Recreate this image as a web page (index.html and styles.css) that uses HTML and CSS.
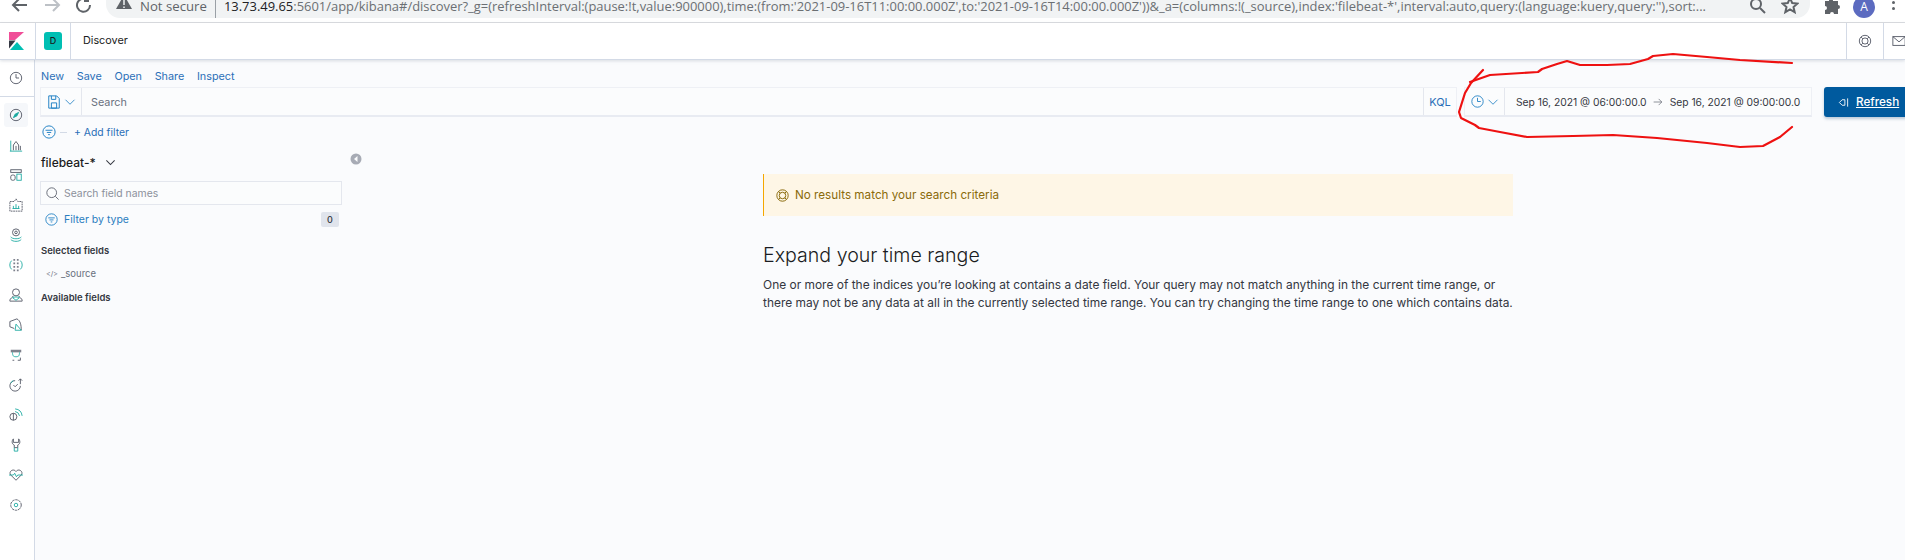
FILE: index.html
```html
<!DOCTYPE html>
<html lang="en">
<head>
<meta charset="utf-8">
<title>Discover - Kibana</title>
<link rel="stylesheet" href="styles.css">
</head>
<body>
<div class="page">
  <div class="browser">
    <div class="browser-nav">
      <span class="slot"><svg viewBox="0 0 22 22" width="22" height="22" class="ic-dark"><path d="M18 5H5M10-1 4 5l6 6"/></svg></span>
      <span class="slot"><svg viewBox="0 0 22 22" width="22" height="22" class="ic-light"><path d="M4 5h13M12-1l6 6-6 6"/></svg></span>
      <span class="slot"><svg viewBox="0 0 22 22" width="22" height="22" class="ic-dark"><path d="M17 5a6.500 6.500 0 1 1-2-4.500M15-3v4h-4"/></svg></span>
    </div>
    <div class="address">
      <svg viewBox="0 0 18 18" width="18" height="18" class="warn"><path d="M9 0 17 14H1Z"/><path d="M9 5v5M9 11.500v1.500" class="warn-mark"/></svg>
      <span class="not-secure">Not secure</span>
      <span class="addr-sep"></span>
      <span class="url"><span class="url-host">13.73.49.65</span>:5601/app/kibana#/discover?_g=(refreshInterval:(pause:!t,value:900000),time:(from:'2021-09-16T11:00:00.000Z',to:'2021-09-16T14:00:00.000Z'))&amp;_a=(columns:!(_source),index:'filebeat-*',interval:auto,query:(language:kuery,query:''),sort:...</span>
      <svg viewBox="0 0 18 18" width="18" height="18" class="ic-dark addr-zoom"><circle cx="7" cy="4" r="5"/><path d="m11 8 5 5"/></svg>
      <svg viewBox="0 0 18 18" width="18" height="18" class="ic-dark addr-star"><path d="m9-2 2.200 5 5.300.5-4 3.500 1.200 5.200L9 9.500l-4.700 2.700L5.500 7l-4-3.500L6.800 3Z"/></svg>
    </div>
    <span class="ext"><svg viewBox="0 0 18 18" width="18" height="18" class="ext-ic"><path d="M2 1h4a2 2 0 0 1 4 0h5v4a2 2 0 0 1 0 4v5H11a2 2 0 0 0-4 0H2v-4a2 2 0 0 0 0-4Z"/></svg></span>
    <span class="avatar">A</span>
    <span class="dots"><i></i><i></i></span>
  </div>

  <header class="kbn-header">
    <div class="logo-cell">
      <svg viewBox="0 0 15 18" width="15" height="18"><path d="M0 0h15L6 8H0Z" fill="#f04e98"/><path d="M0 8.500h6.500L0 16.500Z" fill="#343741"/><path d="M1 18 8 10l7 8Z" fill="#00bfb3"/></svg>
    </div>
    <div class="space-cell"><span class="space-badge">D</span></div>
    <div class="crumb">Discover</div>
    <div class="head-icon">
      <svg viewBox="0 0 16 16" width="16" height="16" class="ic-grey"><circle cx="8" cy="8" r="6.500"/><circle cx="8" cy="8" r="3.500"/><path d="m3.500 3.500 2 2M12.500 3.500l-2 2M3.500 12.500l2-2M12.500 12.500l-2-2"/></svg>
    </div>
    <div class="head-icon mail">
      <svg viewBox="0 0 16 16" width="16" height="16" class="ic-grey"><rect x="1" y="3" width="14" height="10"/><path d="m1 3 7 6 7-6"/></svg>
    </div>
  </header>

  <div class="body-row">
    <nav class="side-nav">
      <div class="nav-recent">
        <svg viewBox="0 0 16 16" width="14" height="14" class="ic-grey"><circle cx="8" cy="8" r="6.500"/><path d="M8 3.500V8h3.500"/></svg>
      </div>
      <div class="nav-list">
        <span class="nav-item active"><svg viewBox="0 0 16 16" width="16" height="16" class="ic-grey"><circle cx="8" cy="8" r="6.500"/><path d="m11 5-4 2-2 4 4-2Z" class="teal-fill"/></svg></span>
        <span class="nav-item"><svg viewBox="0 0 16 16" width="16" height="16" class="ic-grey"><path d="M5 14V8l3-4 3 4v6M8 14V9M13 14V9"/><path d="M1 15h14M2 3v12" class="teal"/></svg></span>
        <span class="nav-item"><svg viewBox="0 0 16 16" width="16" height="16" class="ic-grey"><rect x="2" y="2" width="12" height="3"/><rect x="2" y="8" width="5" height="6" rx="2"/><rect x="9" y="7" width="5" height="7" class="teal"/></svg></span>
        <span class="nav-item"><svg viewBox="0 0 16 16" width="16" height="16" class="ic-grey"><path d="M1 4h5l2-3 2 3h5v11H1Z" stroke-dasharray="2 .8"/><path d="M4 12h8M5 12V9M8 12V7M11 12V9" class="teal"/></svg></span>
        <span class="nav-item"><svg viewBox="0 0 16 16" width="16" height="16" class="ic-grey"><circle cx="8" cy="5" r="4"/><circle cx="8" cy="5" r="1.500"/><path d="M2 10c1 3 11 3 12 0M2 13c2 3 10 3 12 0" class="teal"/></svg></span>
        <span class="nav-item"><svg viewBox="0 0 16 16" width="16" height="16" class="ic-grey"><path d="M5 5h2v2H5ZM9 5h2v2H9ZM5 9h2v2H5ZM9 9h2v2H9ZM5 1h2v2H5ZM9 1h2v2H9ZM5 13h2v2H5ZM9 13h2v2H9Z" class="fill-grey"/><path d="M3 3a7 7 0 0 0 0 10M13 3a7 7 0 0 1 0 10" class="teal"/></svg></span>
        <span class="nav-item"><svg viewBox="0 0 16 16" width="16" height="16" class="ic-grey"><circle cx="8" cy="5" r="4"/><path d="M1 15v-1c0-2 3-3 4-5M15 15v-1c0-2-3-3-4-5M1 15h14"/><path d="M4 11c2-1 6-1 8 0l-4 3Z" class="teal"/></svg></span>
        <span class="nav-item"><svg viewBox="0 0 16 16" width="16" height="16" class="ic-grey"><path d="M9 1 1 4v6l5 2M9 1c4 2 5 7 5 13"/><path d="M14 14H7l1-7Z" class="teal"/></svg></span>
        <span class="nav-item"><svg viewBox="0 0 16 16" width="16" height="16" class="ic-grey"><rect x="2" y="2" width="12" height="3" class="fill-grey"/><path d="M10 14h3v-3M6 14H4"/><path d="M4 5c0 4 1 5 4 5s4-1 4-5" class="teal"/></svg></span>
        <span class="nav-item"><svg viewBox="0 0 16 16" width="16" height="16" class="ic-grey"><path d="M13 1v6M11 3l2-2 2 2M13 9a6 6 0 1 1-6-6"/><path d="m5 8 2 2 3-3" /><path d="M2 6a6 6 0 0 1 3-3" class="teal"/></svg></span>
        <span class="nav-item"><svg viewBox="0 0 16 16" width="16" height="16" class="ic-grey"><circle cx="5" cy="10" r="4"/><path d="M5 6v8"/><path d="M7 4a6 6 0 0 1 5 5M7 1a9 9 0 0 1 8 8" class="teal"/></svg></span>
        <span class="nav-item"><svg viewBox="0 0 16 16" width="16" height="16" class="ic-grey"><path d="M5 1C3 3 3 7 6 8v3h4V8c3-1 3-5 1-7v4H5Z"/><path d="M6 11v4h4v-4" class="teal"/></svg></span>
        <span class="nav-item"><svg viewBox="0 0 16 16" width="16" height="16" class="ic-grey"><path d="M8 14 2 8c-3-4 3-8 6-4 3-4 9 0 6 4Z"/><path d="M0 8h5l1.500-2 2 4L10 8h6" class="teal"/></svg></span>
        <span class="nav-item"><svg viewBox="0 0 16 16" width="16" height="16" class="ic-grey"><circle cx="8" cy="8" r="6" stroke-dasharray="3 .8"/><circle cx="8" cy="8" r="2" class="teal"/></svg></span>
      </div>
    </nav>

    <main class="content">
      <div class="top-menu">
        <a>New</a><a>Save</a><a>Open</a><a>Share</a><a>Inspect</a>
      </div>

      <div class="query-row">
        <div class="query-bar">
          <span class="saved"><svg viewBox="0 0 16 16" width="14" height="14" class="ic-blue"><path d="M2 1h9l3 3v11H2Z"/><path d="M5 1v4h5V1M5 9h6v6H5Z"/></svg><svg viewBox="0 0 16 16" width="12" height="12" class="ic-blue"><path d="m2 5 6 6 6-6"/></svg></span>
          <span class="search-text">Search</span>
          <span class="kql">KQL</span>
        </div>
        <div class="date-box">
          <span class="date-quick"><svg viewBox="0 0 16 16" width="13" height="13" class="ic-blue"><circle cx="8" cy="8" r="7"/><path d="M8 3.500V8h4"/></svg><svg viewBox="0 0 16 16" width="12" height="12" class="ic-blue"><path d="m2 5 6 6 6-6"/></svg></span>
          <span class="date-range">
            <span>Sep 16, 2021 @ 06:00:00.0</span>
            <svg viewBox="0 0 16 16" width="10" height="10" class="ic-grey"><path d="M1 8h13M9 3l5 5-5 5"/></svg>
            <span>Sep 16, 2021 @ 09:00:00.0</span>
          </span>
        </div>
        <button class="refresh"><svg viewBox="0 0 16 16" width="11" height="11" class="ic-white"><path d="M14 2v12M10 4v8H6L2 8l4-4Z"/></svg><span>Refresh</span></button>
      </div>

      <div class="filter-row">
        <svg viewBox="0 0 16 16" width="14" height="14" class="ic-blue"><circle cx="8" cy="8" r="7"/><path d="M4 6h8M5.500 8.500h5M7 11h2"/></svg>
        <span class="filter-dash"></span>
        <a class="add-filter">+ Add filter</a>
      </div>

      <div class="panels">
        <aside class="fields">
          <div class="index-row">
            <span class="index-name">filebeat-*</span>
            <svg viewBox="0 0 16 16" width="11" height="11" class="ic-dark-thin"><path d="m2 5 6 6 6-6"/></svg>
            <svg viewBox="0 0 12 12" width="12" height="12" class="collapse"><circle cx="6" cy="6" r="5.500"/><path d="M7.500 3 4 6l3.500 3Z" class="collapse-mark"/></svg>
          </div>
          <div class="field-search">
            <svg viewBox="0 0 16 16" width="13" height="13" class="ic-grey"><circle cx="7" cy="7" r="6"/><path d="m11.500 11.500 4 4"/></svg>
            <span>Search field names</span>
          </div>
          <div class="type-filter">
            <svg viewBox="0 0 16 16" width="13" height="13" class="ic-blue"><circle cx="8" cy="8" r="7"/><path d="M4 6h8M5.500 8.500h5M7 11h2"/></svg>
            <span class="type-label">Filter by type</span>
            <span class="count">0</span>
          </div>
          <h4 class="field-head">Selected fields</h4>
          <div class="field-item"><span class="code">&lt;/&gt;</span><span>_source</span></div>
          <h4 class="field-head">Available fields</h4>
        </aside>

        <section class="results">
          <div class="callout">
            <svg viewBox="0 0 16 16" width="13" height="13" class="ic-amber"><circle cx="8" cy="8" r="7"/><circle cx="8" cy="8" r="4"/><path d="m3 3 2.200 2.200M13 3l-2.200 2.200M3 13l2.200-2.200M13 13l-2.200-2.200"/></svg>
            <span>No results match your search criteria</span>
          </div>
          <h2 class="expand">Expand your time range</h2>
          <p class="expand-text">One or more of the indices you’re looking at contains a date field. Your query may not match anything in the current time range, or<br>there may not be any data at all in the currently selected time range. You can try changing the time range to one which contains data.</p>
        </section>
      </div>
    </main>
  </div>

  <svg class="scribble" viewBox="0 0 1905 560" width="1905" height="560">
    <path d="M1483 70 1471 83 1465 93 1459 112 1461 118 1475 125 1479 128 1500 132 1527 137 1573 136 1613 135 1657 138 1707 143 1740 147 1763 146 1780 137 1792 127"/>
    <path d="M1470 82 1490 75 1538 72 1542 69 1557 64 1567 61 1580 65 1607 65 1630 64 1648 59 1653 56 1673 54 1707 57 1740 60 1792 63"/>
  </svg>
</div>
</body>
</html>
```
FILE: styles.css
```css
* { box-sizing: border-box; }
html, body { margin: 0; padding: 0; }
body { font-family: Inter, "Liberation Sans", sans-serif; background: #fff; color: #343741; }
.page { position: relative; width: 1905px; height: 560px; overflow: hidden; display: flex; flex-direction: column; }
svg { display: block; flex: none; fill: none; }

.ic-dark path, .ic-dark circle { stroke: #5f6368; stroke-width: 2; }
.ic-light path { stroke: #bdc1c6; stroke-width: 2; }
.ic-grey path, .ic-grey circle, .ic-grey rect { stroke: #4f5461; stroke-width: 1; }
.ic-blue path, .ic-blue circle { stroke: #1f80c4; stroke-width: 1.100; }
.ic-dark-thin path { stroke: #343741; stroke-width: 1.500; }
.ic-white path { stroke: #fff; stroke-width: 1.300; }
.ic-amber path, .ic-amber circle { stroke: #8a6a0a; stroke-width: 1.200; }
svg .teal { stroke: #1ba9a0; fill: none; }
svg .teal-fill { stroke: #1ba9a0; fill: #1ba9a0; }
svg .fill-grey { fill: #7d818c; stroke: none; }

.browser { height: 23px; flex: none; display: flex; align-items: flex-start; border-bottom: 1px solid #dadce0; overflow: hidden; background: #fff; }
.browser-nav { display: flex; padding-left: 4px; width: 106px; flex: none; }
.slot { width: 32px; display: flex; justify-content: center; }
.address { width: 1704px; height: 18px; flex: none; background: #f1f3f4; border-radius: 0 0 14px 14px; display: flex; align-items: flex-end; padding-left: 9px; font-family: "Open Sans", "Liberation Sans", sans-serif; overflow: hidden; }
.warn { align-self: flex-start; margin-top: -5px; }
.warn path:first-child { fill: #5f6368; }
.warn .warn-mark { stroke: #f1f3f4; stroke-width: 1.500; }
.not-secure { margin-left: 7px; font-size: 13.200px; line-height: 24px; color: #5f6368; white-space: nowrap; }
.addr-sep { width: 1px; height: 18px; background: #9aa0a6; margin: 0 8px 0 8px; align-self: flex-start; flex: none; }
.url { font-size: 12.950px; line-height: 24px; color: #6b6f73; white-space: nowrap; width: 1512px; flex: none; overflow: hidden; }
.url-host { color: #202124; }
.addr-zoom { margin-left: 13px; align-self: flex-start; flex: none; }
.addr-star { margin-left: 14px; align-self: flex-start; flex: none; }
.ext { width: 44px; padding-left: 13px; flex: none; }
.ext-ic path { fill: #5f6368; }
.avatar { width: 22px; height: 22px; margin-top: -4px; margin-left: -1px; flex: none; border-radius: 50%; background: #5c6bc0; color: #fff; font: 12px/22px "Open Sans", sans-serif; text-align: center; }
.dots { display: flex; flex-direction: column; gap: 3px; margin: 0 0 0 17px; padding-top: 1px; }
.dots i { width: 3px; height: 3px; border-radius: 50%; background: #5f6368; }

.kbn-header { height: 37px; flex: none; display: flex; align-items: stretch; background: #fff; border-bottom: 1px solid #d3dae6; box-shadow: 0 1px 3px rgba(152,162,179,.35); position: relative; z-index: 1; }
.logo-cell { width: 35px; display: flex; align-items: center; padding-left: 9px; }
.space-cell { width: 36px; display: flex; align-items: center; justify-content: center; border-left: 1px solid #d3dae6; border-right: 1px solid #d3dae6; }
.space-badge { width: 18px; height: 18px; border-radius: 3px; background: #00bfb3; color: #1a1c21; font-size: 9px; font-weight: 500; line-height: 18px; text-align: center; }
.crumb { flex: 1; padding-left: 12px; font-size: 10.800px; line-height: 36px; color: #1a1c21; }
.head-icon { width: 37px; display: flex; align-items: center; justify-content: center; border-left: 1px solid #d3dae6; margin-bottom: 0; }
.head-icon.mail { width: 22px; justify-content: flex-start; padding-left: 8px; }
.head-icon svg { width: 14px; height: 14px; }

.body-row { flex: 1; display: flex; min-height: 0; }
.side-nav { width: 35px; flex: none; background: #fff; border-right: 1px solid #d3dae6; }
.nav-recent { height: 37px; display: flex; align-items: center; justify-content: center; border-bottom: 1px solid #d3dae6; padding-right: 3px; }
.nav-list { display: flex; flex-direction: column; padding-top: 6px; }
.nav-item { height: 30px; width: 24px; margin-left: 4px; display: flex; align-items: center; justify-content: center; border-radius: 3px; flex: none; }
.nav-item.active { background: #f5f7fa; height: 24px; margin: 0 0 3px 4px; }
.nav-item svg { width: 14px; height: 14px; }

.content { flex: 1; min-width: 0; background: #fafbfd; padding-left: 5px; }
.top-menu { height: 27px; display: flex; gap: 12.700px; padding: 10px 0 0 1px; font-size: 10.800px; line-height: 14px; }
.top-menu a { color: #2a6fb8; }

.query-row { display: flex; height: 30px; }
.query-bar { width: 1417px; flex: none; display: flex; align-items: center; border: 1px solid #eef0f5; border-bottom: 2px solid #e8ebf2; background: #fbfcfd; }
.saved { width: 41px; height: 100%; display: flex; align-items: center; justify-content: center; gap: 3px; border-right: 1px solid #e4e7ee; flex: none; }
.search-text { flex: 1; padding: 1px 0 0 9px; font-size: 10.800px; color: #69707d; }
.kql { width: 33px; height: 100%; line-height: 28px; border-left: 1px solid #e4e7ee; text-align: center; font-size: 11px; color: #2a6fb8; flex: none; }
.date-box { width: 348px; flex: none; margin-left: 7px; display: flex; align-items: center; border: 1px solid #eef0f5; border-bottom: 2px solid #e8ebf2; background: #fbfcfd; }
.date-quick { width: 40px; height: 100%; display: flex; align-items: center; justify-content: center; gap: 3px; border-right: 1px solid #e4e7ee; flex: none; }
.date-range { display: flex; align-items: center; gap: 6.500px; padding: 1px 0 0 11px; font-size: 10.300px; color: #343741; white-space: nowrap; }
.refresh { width: 90px; margin-left: 12px; flex: none; height: 30px; border: 0; border-radius: 3px; background: #005a9e; color: #fff; display: flex; align-items: center; gap: 7px; padding: 0 0 0 14px; font: 500 11.700px Inter, sans-serif; box-shadow: 0 2px 3px rgba(0,60,110,.25); }
.refresh span { text-decoration: underline; }

.filter-row { height: 30px; display: flex; align-items: center; padding-left: 2px; }
.filter-dash { width: 7px; height: 1px; background: #d3dae6; margin: 0 7px 0 4px; }
.add-filter { font-size: 10.400px; color: #2a6fb8; }

.panels { display: flex; }
.fields { width: 302px; flex: none; }
.index-row { height: 34px; display: flex; align-items: center; gap: 9px; padding: 0 0 3px 1px; position: relative; }
.index-name { font-size: 12px; font-weight: 500; color: #1a1c21; }
.collapse { position: absolute; left: 310px; top: 6px; }
.collapse circle { fill: #a7abb5; }
.collapse-mark { fill: #fafbfd; }
.field-search { height: 24px; display: flex; align-items: center; gap: 5px; padding-left: 5px; border: 1px solid #e4e7ee; background: #fbfcfd; font-size: 10.400px; color: #8b909b; }
.type-filter { height: 30px; display: flex; align-items: center; gap: 6px; padding: 0 3px 1px 5px; }
.type-label { flex: 1; font-size: 10.500px; color: #2a7dbf; }
.count { width: 18px; height: 15px; border-radius: 2px; background: #e0e4ec; text-align: center; font-size: 9px; line-height: 15px; font-weight: 500; color: #343741; }
.field-head { margin: 0; padding-left: 1px; height: 24px; line-height: 24px; font-size: 9.500px; font-weight: 600; color: #343741; }
.field-head:first-of-type { margin-top: 4px; }
.field-item { height: 23px; display: flex; align-items: center; gap: 5px; padding: 0 0 3px 6px; font-size: 9.500px; color: #69707d; }
.code { font-size: 7px; width: 10px; }

.results { margin-left: 421px; width: 770px; padding-top: 27px; }
.callout { width: 750px; height: 42px; display: flex; align-items: center; gap: 6px; padding-left: 12px; background: #fef6e6; border-left: 1px solid #f5a700; font-size: 11.700px; color: #8a6a0a; }
.expand { margin: 25px 0 0; font-size: 19.600px; line-height: 28px; font-weight: 300; color: #1a1c21; }
.expand-text { margin: 7px 0 0; font-size: 11.950px; line-height: 18px; color: #343741; }

.scribble { position: absolute; left: 0; top: 0; z-index: 5; pointer-events: none; }
.scribble path { stroke: #ee1111; stroke-width: 2.200; fill: none; stroke-linejoin: round; stroke-linecap: round; }
```
